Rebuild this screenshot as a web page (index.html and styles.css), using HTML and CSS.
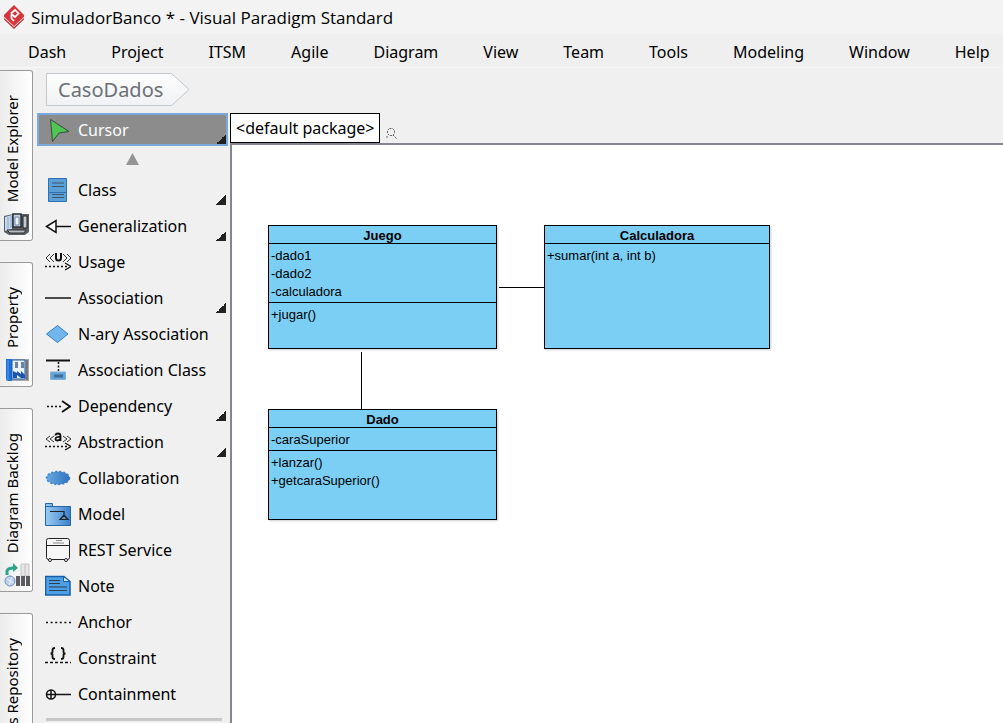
FILE: index.html
```html
<!DOCTYPE html>
<html lang="en">
<head>
<meta charset="utf-8">
<title>SimuladorBanco * - Visual Paradigm Standard</title>
<link rel="stylesheet" href="styles.css">
</head>
<body>
<header class="titlebar">
  <svg class="logo" width="20" height="24" viewBox="0 0 20 24" aria-hidden="true">
    <path d="M0 13 10 22 20 13v1.500L10 24 0 14.500z" fill="#b92f34"/>
    <path d="M10 0 20 10v2L10 21.500 0 12v-2z" fill="#d8353a"/>
    <path d="M0 12 10 21.500 20 12" fill="none" stroke="#f3dcdc" stroke-width=".6"/>
    <path d="M7 8.500 11 5 14.500 8.500 11 12 8 9.500M7.500 8.500v5L10 16" fill="none" stroke="#fff" stroke-width="1.700"/>
  </svg>
  <h1 class="title">SimuladorBanco * - Visual Paradigm Standard</h1>
</header>
<nav class="menubar">
  <button class="menu">Dash</button>
  <button class="menu">Project</button>
  <button class="menu">ITSM</button>
  <button class="menu">Agile</button>
  <button class="menu">Diagram</button>
  <button class="menu">View</button>
  <button class="menu">Team</button>
  <button class="menu">Tools</button>
  <button class="menu">Modeling</button>
  <button class="menu">Window</button>
  <button class="menu">Help</button>
</nav>
<div class="body">
  <aside class="dock">
    <button class="dock-tab">
      <span class="dock-label">Model Explorer</span>
      <svg width="26" height="24" viewBox="0 0 26 24" aria-hidden="true">
        <path d="M0 4 9 2h16v18l-4 3H5l-5-3z" fill="#5c6066"/>
        <path d="M1 5l7-2v14l-7 2z" fill="#c5d8ee"/><path d="M4 5v12M7 4v12" stroke="#84a5cc"/>
        <path d="M9 2h8v13H9z" fill="#c9d5e3" stroke="#2c2f33" stroke-width="1.500"/>
        <path d="M11 5h4v8h-4z" fill="#eef4fb" stroke="#6c87ab"/>
        <path d="M19 4h4v12h-4z" fill="#c3cbd5" stroke="#222"/>
        <path d="M3 18h19l-2 3H6z" fill="#b9bcc0" stroke="#2c2f33"/>
      </svg>
    </button>
    <button class="dock-tab">
      <span class="dock-label">Property</span>
      <svg width="26" height="24" viewBox="0 0 26 24" aria-hidden="true">
        <path d="M2 1h23v22H2z" fill="#a9a9a9"/>
        <path d="M2 1h6v22H4l-2-2z" fill="#1b6fd6"/><path d="M4 2v20" stroke="#5aa2f2" stroke-width="1"/>
        <path d="M8 2h13v19H8z" fill="#e9f2fd" stroke="#1a59b0"/>
        <path d="M11 4h3v6h-3zM17 4h3v6h-3z" fill="#70809a"/>
        <path d="M9 13l4 2v-2l4 3v-3l4 4v3h-4l-4-3v3H9z" fill="#1d55ae"/>
        <path d="M23 2v20" stroke="#777" stroke-width="2"/>
      </svg>
    </button>
    <button class="dock-tab">
      <span class="dock-label">Diagram Backlog</span>
      <svg width="26" height="24" viewBox="0 0 26 24" aria-hidden="true">
        <path d="M3 12V8q1-3 6-3h1" fill="none" stroke="#2aa58b" stroke-width="3"/><path d="M9 0l5 5-5 4z" fill="#2aa58b"/>
        <path d="M17 1h8v12h-8zM21 1v12" fill="#e6e6e6" stroke="#c4c4c4"/>
        <path d="M12 13h4v10h-4zM17 13h4v10h-4zM22 13h4v10h-4z" fill="#5b5b5d"/>
        <circle cx="6" cy="18" r="5" fill="#b9d0ef" stroke="#6f93c0"/>
        <path d="M3 16l6 4M8 14l-3 8" stroke="#eff5fc"/>
      </svg>
    </button>
    <button class="dock-tab">
      <span class="dock-label">s Repository</span>
    </button>
  </aside>
  <main class="workspace">
    <nav class="crumbs">
      <a class="crumb" href="#">
        <svg class="crumb-shape" width="144" height="33" viewBox="0 0 144 33" aria-hidden="true">
          <defs><linearGradient id="crumb-fill" x2="0" y2="1"><stop stop-color="#fdfdfd"/><stop offset="1" stop-color="#f0f2f4"/></linearGradient></defs>
          <path d="M.5.500h125L143 16.500 125.500 32.500H.5z" fill="url(#crumb-fill)" stroke="#c3c8cd"/>
        </svg>
        <span class="crumb-text">CasoDados</span>
      </a>
    </nav>
    <div class="editor">
      <section class="palette">
        <button class="tool selected more">
          <svg width="26" height="26" viewBox="0 0 26 26" aria-hidden="true"><path d="M5.500 2.500 24 14.500 14 16 7.500 24.500z" fill="#4fc653" stroke="#3a4a3a"/></svg>
          Cursor
        </button>
        <button class="scroll-up" aria-label="Scroll up"><svg width="13" height="12" viewBox="0 0 13 12"><path d="M6.500 0 13 12H0z" fill="#949494"/></svg></button>
        <button class="tool more">
          <svg width="26" height="26" viewBox="0 0 26 26" aria-hidden="true"><path d="M3.500 1.500h18v23h-18z" fill="#5b9fd9" stroke="#2f6fb5"/><path d="M4 15.500h17" stroke="#2f6fb5"/><path d="M7 6h12M7 9.500h12M7 17.500h12M7 20.500h12" stroke="#3f5468" stroke-width="1.200"/></svg>
          Class
        </button>
        <button class="tool more">
          <svg width="26" height="26" viewBox="0 0 26 26" aria-hidden="true"><path d="M1.500 13.500 11 7.500v12zM11 13.500h15" fill="#fff" stroke="#111" stroke-width="1.500"/></svg>
          Generalization
        </button>
        <button class="tool">
          <svg width="26" height="26" viewBox="0 0 26 26" aria-hidden="true"><path d="M5 5 1 9l4 4M9 5 5 9l4 4M18 5l4 4-4 4M22 5l4 4-4 4" fill="none" stroke="#333"/><path d="M11 4v5q0 2.500 2.500 2.500T16 9V4" fill="none" stroke="#111" stroke-width="2"/><path d="M0 17.500h24" stroke="#111" stroke-width="1.500" stroke-dasharray="2 2"/><path d="M20 14l6 3.500-6 3.500" fill="none" stroke="#111" stroke-width="1.200"/></svg>
          Usage
        </button>
        <button class="tool more">
          <svg width="26" height="26" viewBox="0 0 26 26" aria-hidden="true"><path d="M0 13h26" stroke="#4a4a4a" stroke-width="2"/></svg>
          Association
        </button>
        <button class="tool">
          <svg width="26" height="26" viewBox="0 0 26 26" aria-hidden="true"><path d="M12.500 4.500 23 13 12.500 21.500 1.500 13z" fill="#73b6ee" stroke="#2e7fc7"/></svg>
          N-ary Association
        </button>
        <button class="tool">
          <svg width="26" height="26" viewBox="0 0 26 26" aria-hidden="true"><path d="M1 3.500h24" stroke="#111" stroke-width="2"/><path d="M13.500 5v9" stroke="#111" stroke-width="1.500" stroke-dasharray="2 1.500"/><path d="M5.500 15h15v7.500h-15z" fill="#65a4db" stroke="#7eb0dc"/><path d="M9 17.500h9v3H9z" fill="#3f6d9a"/></svg>
          Association Class
        </button>
        <button class="tool more">
          <svg width="26" height="26" viewBox="0 0 26 26" aria-hidden="true"><path d="M2 13.500h16" stroke="#111" stroke-width="1.500" stroke-dasharray="2 2"/><path d="M17 8l8 5.500-8 5.500" fill="none" stroke="#111" stroke-width="1.800"/></svg>
          Dependency
        </button>
        <button class="tool more">
          <svg width="26" height="26" viewBox="0 0 26 26" aria-hidden="true"><path d="M5 7 1 10l4 3M9 7l-4 3 4 3M18 7l4 3-4 3M22 7l4 3-4 3" fill="none" stroke="#333"/><path d="M10.500 6.500q0-2 2.500-2 2.500 0 2.500 2.500v5M15.500 8Q10.500 7.500 10.500 10q0 1.500 2 1.500t3-2" fill="none" stroke="#111" stroke-width="1.800"/><path d="M0 17.500h24" stroke="#111" stroke-width="1.500" stroke-dasharray="2 2"/><path d="M20 14l6 3.500-6 3.500" fill="none" stroke="#111" stroke-width="1.200"/></svg>
          Abstraction
        </button>
        <button class="tool">
          <svg width="26" height="26" viewBox="0 0 26 26" aria-hidden="true"><defs><linearGradient id="oval"><stop stop-color="#68aae2"/><stop offset="1" stop-color="#2f72bd"/></linearGradient></defs><ellipse cx="13" cy="13" rx="11.500" ry="6.500" fill="url(#oval)" stroke="#3b7fc6" stroke-width="1.500" stroke-dasharray="2 2"/></svg>
          Collaboration
        </button>
        <button class="tool">
          <svg width="26" height="26" viewBox="0 0 26 26" aria-hidden="true"><defs><linearGradient id="folder"><stop stop-color="#9bcbf3"/><stop offset="1" stop-color="#3a80cb"/></linearGradient></defs><path d="M.5 2.500h7v3h18v19H.5z" fill="url(#folder)" stroke="#2566a8"/><path d="M1 5.500h7" stroke="#2566a8"/><path d="M5 10.500h14v4M15 18.500l4-4.500 4 4.500z" fill="none" stroke="#222" stroke-width="1.200"/></svg>
          Model
        </button>
        <button class="tool">
          <svg width="26" height="26" viewBox="0 0 26 26" aria-hidden="true"><rect x="1.500" y="1.500" width="23" height="21" rx="2" fill="#f6f6f6" stroke="#222"/><path d="M2 8.500h22" stroke="#222"/><path d="M11 3.500h6M8 6h11" stroke="#888"/><circle cx="5" cy="23" r="1.500" fill="#fff" stroke="#222"/><circle cx="21" cy="23" r="1.500" fill="#fff" stroke="#222"/></svg>
          REST Service
        </button>
        <button class="tool">
          <svg width="26" height="26" viewBox="0 0 26 26" aria-hidden="true"><path d="M.5 3.500H19l6 5v13.500H.5z" fill="#4d9fe6" stroke="#175ea9" stroke-width="1.500"/><path d="M18.500 3.500v5H25z" fill="#d6eafb" stroke="#175ea9"/><path d="M4 7.500h11M4 10.500h11M4 14h18M4 17.500h18" stroke="#2f3f4d" stroke-width="1.200"/></svg>
          Note
        </button>
        <button class="tool">
          <svg width="26" height="26" viewBox="0 0 26 26" aria-hidden="true"><path d="M1 13.500h25" stroke="#111" stroke-width="1.500" stroke-dasharray="2 2.600"/></svg>
          Anchor
        </button>
        <button class="tool">
          <svg width="26" height="26" viewBox="0 0 26 26" aria-hidden="true"><path d="M10 3q-2.500 0-2.500 2v2q0 1.500-2 1.500 2 0 2 1.500v2q0 2 2.500 2M16 3q2.500 0 2.500 2v2q0 1.500 2 1.500-2 0-2 1.500v2q0 2-2.500 2" fill="none" stroke="#111" stroke-width="1.800"/><path d="M0 17.500h26" stroke="#111" stroke-width="1.500" stroke-dasharray="3 2"/></svg>
          Constraint
        </button>
        <button class="tool">
          <svg width="26" height="26" viewBox="0 0 26 26" aria-hidden="true"><circle cx="6" cy="13.500" r="4.500" fill="none" stroke="#111" stroke-width="1.500"/><path d="M1.500 13.500H26M6 9v9" stroke="#111" stroke-width="1.500"/></svg>
          Containment
        </button>
        <hr class="divider">
      </section>
      <section class="diagram">
        <div class="package-bar">
          <button class="package">&lt;default package&gt;</button>
          <button class="search" aria-label="Search"><svg width="11" height="11" viewBox="0 0 11 11"><path d="M3.500.5h3l2 2v3l-2 2h-3l-2-2v-3zM7 7l4 4M0 9h2" fill="none" stroke="#666" stroke-dasharray="2 1"/></svg></button>
        </div>
        <div class="canvas">
          <i class="link link-h"></i>
          <i class="link link-v"></i>
          <article class="uml juego">
            <h2>Juego</h2>
            <ul><li>-dado1</li><li>-dado2</li><li>-calculadora</li></ul>
            <ul><li>+jugar()</li></ul>
          </article>
          <article class="uml calculadora">
            <h2>Calculadora</h2>
            <ul><li>+sumar(int a, int b)</li></ul>
          </article>
          <article class="uml dado">
            <h2>Dado</h2>
            <ul><li>-caraSuperior</li></ul>
            <ul><li>+lanzar()</li><li>+getcaraSuperior()</li></ul>
          </article>
        </div>
      </section>
    </div>
  </main>
</div>
</body>
</html>
```
FILE: styles.css
```css
* { box-sizing: border-box; }
body {
  margin: 0;
  height: 100vh;
  overflow: hidden;
  display: flex;
  flex-direction: column;
  background: #f0f0f0;
  color: #000;
  font: 16px/20px "Noto Sans", sans-serif;
}
button { margin: 0; padding: 0; border: 0; background: none; color: inherit; font: inherit; }
svg { display: block; flex: none; }
h1, h2, ul { margin: 0; padding: 0; list-style: none; }

.titlebar { flex: none; height: 34px; display: flex; align-items: center; gap: 7px; padding-left: 4px; background: #f3f3f3; }
.title { padding-top: 2px; font: 17px/24px "Open Sans", sans-serif; }

.menubar { flex: none; height: 34px; display: flex; align-items: center; gap: 1px; padding-left: 6px; border-bottom: 1px solid #f8f8f8; background: #efefef; }
.menu { padding: 2px 22px 0; }

.body { flex: 1; min-height: 0; display: flex; padding-top: 2px; }
.dock { flex: none; width: 33px; display: flex; flex-direction: column; gap: 21px; overflow: hidden; margin-right: 4px; }
.dock-tab {
  flex: none; display: flex; flex-direction: column; align-items: flex-start; gap: 10px;
  padding: 24px 2px 4px 4px;
  border: 1px solid #9a9a9a; border-left: 0; border-radius: 0 3px 3px 0;
  background: linear-gradient(90deg, #ececec, #fff);
}
.dock-label { writing-mode: vertical-rl; transform: rotate(180deg); font-size: 15px; line-height: 16px; white-space: nowrap; }

.workspace { flex: 1; min-width: 0; display: flex; flex-direction: column; }
.crumbs { flex: none; height: 43px; padding: 3px 0 0 9px; }
.crumb { display: grid; width: max-content; color: #6d7075; text-decoration: none; font-size: 20px; }
.crumb > * { grid-area: 1 / 1; }
.crumb-text { padding-left: 12px; align-self: center; }

.editor { flex: 1; min-height: 0; display: flex; }
.palette { flex: none; width: 193px; padding-right: 2px; overflow: hidden; }
.tool { position: relative; width: 100%; height: 36px; display: flex; align-items: center; gap: 7px; padding-left: 8px; white-space: nowrap; }
.selected { height: 33px; padding-left: 6px; border: 2px solid #7aa7dc; background: #8c8c8c; color: #fff; }
.more::after { content: ""; position: absolute; right: 2px; bottom: 3px; width: 10px; height: 10px; background: linear-gradient(135deg, transparent 50%, #222 50%); }
.selected::after { right: 0; bottom: 0; }
.scroll-up { width: 100%; height: 26px; display: grid; place-items: center; }
.divider { height: 3px; margin: 6px 6px 0 9px; border: 0; background: #c8c8c8; }

.diagram { flex: 1; min-width: 0; display: flex; flex-direction: column; }
.package-bar { flex: none; height: 30px; display: flex; align-items: center; gap: 6px; }
.package { height: 30px; padding: 0 5px; border: 1px solid #000; background: #fff; white-space: nowrap; }
.search { padding-top: 10px; }
.canvas { flex: 1; position: relative; overflow: hidden; border: solid #85858f; border-width: 2px 0 0 2px; background: #fff; font: 13px/18px "Liberation Sans", sans-serif; }
.uml { position: absolute; border: 1px solid #000; background: #7bcff5; box-shadow: 1px 1px 2px #0003; }
.uml h2 { padding-top: 2px; font-size: 13px; line-height: 15px; text-align: center; }
.uml ul { padding: 3px 2px 1px; border-top: 1px solid #000; }
.juego { left: 36px; top: 80px; width: 229px; height: 124px; }
.calculadora { left: 312px; top: 80px; width: 226px; height: 124px; }
.dado { left: 36px; top: 264px; width: 229px; height: 111px; }
.link { position: absolute; background: #000; }
.link-h { left: 267px; top: 142px; width: 45px; height: 1px; }
.link-v { left: 129px; top: 207px; width: 1px; height: 58px; }
```
